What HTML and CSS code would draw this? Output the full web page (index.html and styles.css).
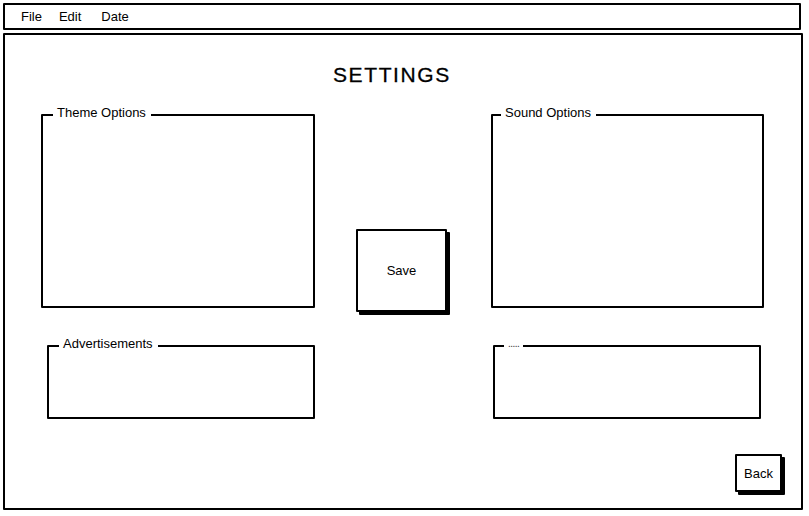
FILE: index.html
```html
<!DOCTYPE html>
<html>
<head>
<meta charset="utf-8">
<link rel="stylesheet" href="styles.css">
</head>
<body>
<div class="menubar">
  <span class="menu-item">File</span>
  <span class="menu-item">Edit</span>
  <span class="menu-item date">Date</span>
</div>
<div class="main">
  <h1 class="title">SETTINGS</h1>
  <div class="grid">
    <div class="group theme"><span class="legend">Theme Options</span></div>
    <div class="save-cell"><button class="btn save">Save</button></div>
    <div class="group sound"><span class="legend">Sound Options</span></div>
    <div class="group ads"><span class="legend">Advertisements</span></div>
    <div class="group misc"><span class="legend dots">.....</span></div>
  </div>
  <div class="footer">
    <button class="btn back">Back</button>
  </div>
</div>
</body>
</html>
```
FILE: styles.css
```css
* { box-sizing: border-box; }
html, body { margin: 0; padding: 0; background: #fff; }
body {
  font-family: "Liberation Sans", Arial, sans-serif;
  font-size: 13px;
  color: #000;
  width: 809px;
  height: 516px;
  overflow: hidden;
}
.menubar {
  margin: 3px 8px 0 3px;
  height: 27px;
  border: 2px solid #000;
  border-radius: 1px;
  display: flex;
  align-items: center;
  gap: 17px;
  padding-left: 16px;
  line-height: 15px;
}
.menu-item { display: inline-block; }
.menu-item.date { margin-left: 3px; }
.main {
  margin: 3px 6px 0 3px;
  height: 477px;
  border: 2px solid #000;
  border-radius: 1px;
}
.title {
  margin: 0;
  padding: 28px 0 0 328px;
  font-size: 21px;
  line-height: 24px;
  font-weight: normal;
  letter-spacing: 1.6px;
  -webkit-text-stroke: 0.3px #000;
}
.grid {
  margin-top: 27px;
  padding-left: 36px;
  display: grid;
  grid-template-columns: 274px 176px 273px;
  grid-template-rows: 194px 74px;
  row-gap: 37px;
}
.group {
  position: relative;
  border: 2px solid #000;
  border-radius: 1px;
}
.legend {
  position: absolute;
  top: -11px;
  left: 10px;
  padding: 0 5px 0 4px;
  background: #fff;
  line-height: 15px;
  white-space: nowrap;
}
.sound .legend { left: 8px; }
.legend.dots {
  font-size: 10px;
  color: #333;
  top: -11px;
  left: 9px;
  padding: 0 4px 0 4px;
  letter-spacing: -0.5px;
}
.theme { grid-column: 1; grid-row: 1; }
.sound { grid-column: 3; grid-row: 1; }
.save-cell { grid-column: 2; grid-row: 1 / span 2; padding: 115px 0 0 41px; }
.ads { grid-column: 1; grid-row: 2; margin-left: 6px; width: 268px; }
.misc { grid-column: 3; grid-row: 2; margin-left: 2px; width: 268px; }
.btn {
  font-family: inherit;
  font-size: 13px;
  color: #000;
  background: #fff;
  border: 2px solid #000;
  border-radius: 1px;
  box-shadow: 3px 3px 0 #000;
  padding: 0;
  display: flex;
  align-items: center;
  justify-content: center;
}
.save { width: 91px; height: 83px; }
.footer {
  margin-top: 35px;
  padding-right: 19px;
  display: flex;
  justify-content: flex-end;
}
.back { width: 47px; height: 38px; }
```
